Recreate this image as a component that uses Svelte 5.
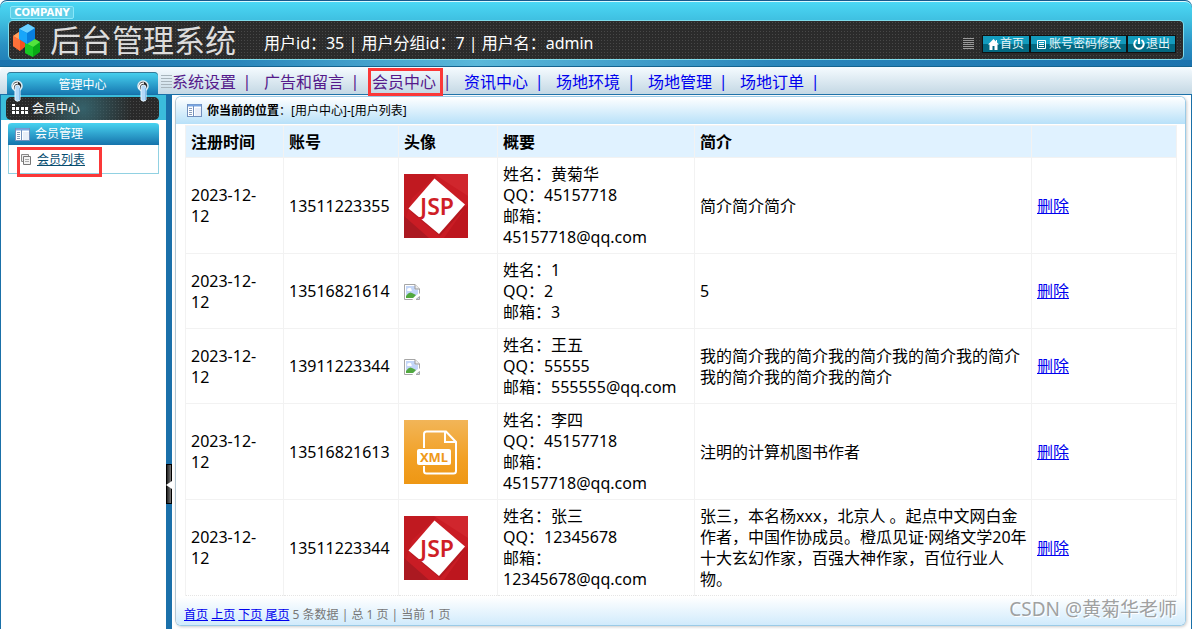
<script>
  const nav = [
    { label: '系统设置', seen: true },
    { label: '广告和留言', seen: true },
    { label: '会员中心', seen: true, marked: true },
    { label: '资讯中心' },
    { label: '场地环境' },
    { label: '场地管理' },
    { label: '场地订单' }
  ];
  const date = '2023-12-\n12';
  const members = [
    { account: '13511223355', pic: 'jsp', info: '姓名：黄菊华\nQQ：45157718\n邮箱：\n45157718@qq.com', intro: '简介简介简介' },
    { account: '13516821614', pic: 'none', info: '姓名：1\nQQ：2\n邮箱：3', intro: '5' },
    { account: '13911223344', pic: 'none', info: '姓名：王五\nQQ：55555\n邮箱：555555@qq.com', intro: '我的简介我的简介我的简介我的简介我的简介我的简介我的简介我的简介' },
    { account: '13516821613', pic: 'xml', info: '姓名：李四\nQQ：45157718\n邮箱：\n45157718@qq.com', intro: '注明的计算机图书作者' },
    { account: '13511223344', pic: 'jsp', info: '姓名：张三\nQQ：12345678\n邮箱：\n12345678@qq.com', intro: '张三，本名杨xxx，北京人 。起点中文网白金作者，中国作协成员。橙瓜见证·网络文学20年十大玄幻作家，百强大神作家，百位行业人物。' }
  ];
</script>

{#snippet windowIcon()}
  <svg class="win" width="16" height="13" viewBox="0 0 16 13" aria-hidden="true">
    <rect x=".5" y=".5" width="14" height="12" fill="#fff" stroke="#7290bd" />
    <path d="M1 1.5h13" stroke="#78a5e2" stroke-width="2" />
    <path d="M6.5 2v10" stroke="#7290bd" />
    <path d="M2 4.5h3M2 6.5h3M2 8.5h3M2 10.5h3" stroke="#889bb8" />
    <path d="M8 4h6v8H8z" fill="#e9eef8" />
  </svg>
{/snippet}

{#snippet ring()}
  <svg width="14" height="24" viewBox="0 0 14 24" aria-hidden="true">
    <circle cx="6" cy="6" r="5" fill="#2a2a2a" stroke="#dcecf3" stroke-width="1.500" />
    <path d="M2 9q0-6 5-6" fill="none" stroke="#fff" stroke-width="1.500" />
    <path d="M4 20V7.500a2.500 2.500 0 0 1 5 0V20q-2.500 2.500-5 0" fill="#b4d9f8" stroke="#e9f6ff" />
    <path d="M8.500 8v12" stroke="#86bdea" />
  </svg>
{/snippet}

<div class="page">
  <header>
    <div class="company"><span>COMPANY</span></div>
    <div class="banner">
      <svg class="logo" width="28" height="33" viewBox="0 0 28 33" aria-hidden="true">
        <path d="M0 12l6-4 7 4v10l-6 5-7-5z" fill="#f4511e" /><path d="M0 12l6-4 7 4-6 4z" fill="#ffa05c" /><path d="M0 12l7 4v11l-7-5z" fill="#ff7139" />
        <path d="M12 19l8-5 7 4v10l-7 5-8-4z" fill="#08a916" /><path d="M12 19l8-5 7 4-7 5z" fill="#52e33d" /><path d="M12 19l8 4v10l-8-4z" fill="#17c824" />
        <path d="M6 5l9-5 7 4v11l-8 5-8-5z" fill="#087fdf" /><path d="M6 5l9-5 7 4-8 5z" fill="#6ad0ff" /><path d="M6 5l8 4v11l-8-5z" fill="#18a6fa" />
      </svg>
      <h1>后台管理系统</h1>
      <p class="user">用户id：35 | 用户分组id：7 | 用户名：admin</p>
      <i class="lines"></i>
      <div class="actions">
        <button><svg width="11" height="11" viewBox="0 0 11 11" aria-hidden="true"><path d="M5.5 0L0 5.5h1.500V11h3V7h2v4h3V5.500H11L9 3.500V1H8v1.500z" fill="#fff" /></svg>首页</button>
        <button><svg class="wide" width="11" height="11" viewBox="0 0 11 11" aria-hidden="true"><path d="M1.500 1.500h8v8h-8zM3 3.500h5M3 5.500h5M3 7.500h5" fill="none" stroke="#fff" /></svg>账号密码修改</button>
        <button><svg width="12" height="12" viewBox="0 0 12 12" aria-hidden="true"><path d="M3.500 2a4.700 4.700 0 1 0 5 0M6 0v6" fill="none" stroke="#fff" stroke-width="2" /></svg>退出</button>
      </div>
    </div>
  </header>

  <div class="navbar">
    <div class="tab">管理中心<span class="ring left">{@render ring()}</span><span class="ring right">{@render ring()}</span></div>
    <i class="lines light"></i>
    <nav>
      {#each nav as item}
        <a href="#top" class:seen={item.seen} class:marked={item.marked}>{item.label}</a><span class="bar">|</span>
      {/each}
    </nav>
  </div>

  <div class="body">
    <aside>
      <div class="group">
        <div class="current">
          <svg width="16" height="10" viewBox="0 0 16 10" aria-hidden="true"><path d="M0 0h3v2H0zM0 3h3v3H0zM4 3h3v3H4zM9 3h3v3H9zM13 3h3v3h-3zM0 7h3v3H0zM4 7h3v3H4zM9 7h3v3H9zM13 7h3v3h-3z" fill="#fff" /></svg>
          会员中心
        </div>
      </div>
      <section class="menu">
        <h2>{@render windowIcon()}会员管理</h2>
        <ul>
          <li>
            <svg width="11" height="11" viewBox="0 0 11 11" aria-hidden="true"><path d="M.5.5h7v7h-7z" fill="#eee" stroke="#888" /><path d="M2.500 2.500h7v8h-7z" fill="#f3f3f3" stroke="#777" /><path d="M4 5.500h4M4 7.500h4" stroke="#aaa" /></svg>
            <a href="#list">会员列表</a>
          </li>
        </ul>
      </section>
    </aside>
    <div class="split"><button aria-label="收起"></button></div>
    <main>
      <div class="panel">
        <div class="crumb">{@render windowIcon()}<b>你当前的位置</b>：[用户中心]-[用户列表]</div>
        <table>
          <colgroup><col class="c1" /><col class="c2" /><col class="c3" /><col class="c4" /><col class="c5" /><col class="c6" /></colgroup>
          <thead><tr><th>注册时间</th><th>账号</th><th>头像</th><th>概要</th><th>简介</th><th></th></tr></thead>
          <tbody>
            {#each members as m}
              <tr>
                <td>{date}</td>
                <td>{m.account}</td>
                <td>
                  {#if m.pic === 'jsp'}
                    <svg width="64" height="64" viewBox="0 0 64 64" aria-hidden="true">
                      <rect width="64" height="64" fill="#c91c24" />
                      <path d="M0 0h34L8 24 0 50z" fill="#c01920" /><path d="M30 0h34v22z" fill="#d0262d" /><path d="M0 42l25 22H0z" fill="#ab1921" /><path d="M64 30v34H40z" fill="#bd161e" />
                      <path d="M33 8l29 25-26 29L7 38z" fill="#95131a" opacity=".4" />
                      <path d="M30.500 4.500L61 30.500 35 60 4.500 34.500z" fill="#fff" />
                      <text x="33" y="41" text-anchor="middle" font-size="23" font-weight="600" fill="#cf1f27">JSP</text>
                    </svg>
                  {:else if m.pic === 'xml'}
                    <svg width="64" height="64" viewBox="0 0 64 64" aria-hidden="true">
                      <defs><linearGradient id="orange" x1="0" y1="0" x2="0" y2="1"><stop offset="0" stop-color="#f2b558" /><stop offset=".6" stop-color="#f2a024" /><stop offset="1" stop-color="#ee9714" /></linearGradient></defs>
                      <rect width="64" height="64" fill="url(#orange)" />
                      <path d="M20 28V14q0-2.500 2.500-2.500H42L52 22v29q0 2.500-2.500 2.500h-27Q20 53.500 20 51v-5M41 12v10h10" fill="none" stroke="#fff" stroke-width="2" />
                      <rect x="13" y="29" width="34" height="16" rx="2" fill="#fff" />
                      <text x="30" y="42" text-anchor="middle" font-size="13" font-weight="700" fill="#ef9a1a">XML</text>
                    </svg>
                  {:else}
                    <svg width="16" height="16" viewBox="0 0 16 16" aria-hidden="true">
                      <path d="M.5.500h10.500l4.500 4.500v5.500l-5 5H.500z" fill="#fff" stroke="#a6a6a6" />
                      <path d="M2 2h9v3.500h3v4.500l-5 4H2z" fill="#c3d6f8" />
                      <path d="M3 6q0-2 2-2 2-1 2.500 1.500Q8.500 7 7 7H4Q3 7 3 6" fill="#fff" />
                      <path d="M2 14v-2q3-5 6-3l4 2-3 3z" fill="#51a83f" />
                      <path d="M9 16l7-6" stroke="#fff" stroke-width="2" />
                      <path d="M12 15.500h3.500V12.500z" fill="#c3d6f8" stroke="#a6a6a6" />
                      <path d="M11 .5v4.500h4.500" fill="#eee" stroke="#999" />
                    </svg>
                  {/if}
                </td>
                <td>{m.info}</td>
                <td>{m.intro}</td>
                <td><a href="#delete">删除</a></td>
              </tr>
            {/each}
          </tbody>
        </table>
        <footer>
          <a href="#first">首页</a> <a href="#prev">上页</a> <a href="#next">下页</a> <a href="#last">尾页</a> 5 条数据 | 总 1 页 | 当前 1 页
        </footer>
      </div>
      <div class="mark">CSDN @黄菊华老师</div>
    </main>
  </div>
</div>

<style>
  :global(body) { margin: 0; background: #fff; }
  .page { min-height: 100vh; display: flex; flex-direction: column; box-sizing: border-box; position: relative; font: 16px/21px "Noto Sans", "Noto Sans CJK SC", sans-serif; color: #000; overflow: hidden; }
  .page, button { font-family: "Noto Sans", "Noto Sans CJK SC", sans-serif; }
  a { color: #00e; }
  header { height: 67px; box-sizing: border-box; padding: 3px 9px 7px; background: linear-gradient(90deg, #1b73ae, #2a86bb 20%, #5ab8da 40%, #2a86bb 65%, #1b73ae) 0 100% / 100% 6px no-repeat, linear-gradient(#4bd8f5 2px, #3fc0e1 20px, #2a91c4 45px, #207fb7 62px, #126493); border-bottom: 1px solid #146490; box-shadow: inset 0 1px #17598c, inset 0 3px 0 -1px #d9f8ff; border-radius: 7px 7px 0 0; }
  .company { height: 18px; display: flex; align-items: center; }
  .company span { margin-left: 1px; width: 62px; height: 11px; border: 1px solid #8ae7f9; border-radius: 2px; background: #5ecfe8; color: #fff; font: 700 10px/11px "DejaVu Sans", sans-serif; text-align: center; }
  .banner { height: 38px; box-sizing: border-box; display: flex; align-items: center; border-radius: 4px; box-shadow: 0 0 0 1px #7fdcec; background: radial-gradient(circle, #484848 1px, transparent 1px) 0 0 / 3px 3px, #2b2b2b; padding: 0 8px 0 4px; }
  h1 { margin: 0 0 0 9px; font-size: 31px; line-height: 38px; font-weight: 400; color: #ddd; white-space: nowrap; }
  .user { margin: 6px 0 0 28px; color: #fff; flex: 1; white-space: nowrap; }
  .lines { width: 11px; height: 12px; flex: none; margin: 8px 9px 0 0; background: repeating-linear-gradient(#999 0 1px, transparent 1px 2px); }
  .lines.light { margin: 8px 0 0; background: repeating-linear-gradient(#a8b5bd 0 1px, transparent 1px 3px); height: 14px; }
  .actions { display: flex; gap: 2px; margin-top: 8px; }
  .actions button { height: 16px; padding: 0 5px; display: flex; align-items: center; gap: 1px; border: 0; outline: 1px solid #111; background: linear-gradient(#139bbd 50%, #026982 50%); color: #e9f5f8; font-size: 12px; line-height: 16px; white-space: nowrap; }
  .actions .wide { margin-right: 1px; }
  .navbar { height: 28px; box-sizing: border-box; display: flex; border-bottom: 1px solid #1a70a8; background: linear-gradient(#f5fbff, #c4d8e4); border-radius: 5px 5px 0 0; }
  .tab { position: relative; width: 151px; height: 22px; margin: 5px 3px 0 7px; flex: none; border-radius: 4px 4px 0 0; background: linear-gradient(#48d3f0, #1779b2); color: #fff; font-size: 12px; line-height: 25px; text-align: center; box-shadow: inset 0 1px #357996; }
  .ring { position: absolute; top: 8px; z-index: 2; line-height: 0; }
  .ring.left { left: 4px; }
  .ring.right { right: 7px; }
  nav { display: flex; }
  nav a { text-decoration: none; line-height: 30px; white-space: nowrap; }
  nav a.seen { color: #551a8b; }
  nav a.marked { position: relative; z-index: 1; height: 22px; line-height: 23px; padding: 0 4px 0 1px; margin: 1px -7px 0 -4px; border: 3px solid #fb3838; }
  .bar { width: 28px; box-sizing: border-box; padding-right: 6px; text-align: center; line-height: 28px; color: #00e; }
  nav a.seen + .bar { color: #551a8b; }
  .body { flex: 1; display: flex; }
  aside { width: 165px; flex: none; border-left: 1px solid #1a70a8; }
  .group { background: #3bbddb; padding: 2px 7px 0 5px; }
  .current { height: 23px; box-sizing: border-box; border-radius: 5px; padding-left: 6px; display: flex; align-items: center; gap: 4px; background: radial-gradient(circle at center, #35616a, transparent 65%), radial-gradient(circle, #484848 1px, transparent 1px) 0 0 / 3px 3px, #292929; color: #fff; font-size: 12px; }
  .menu { margin: 3px 7px 0; border: 1px solid #91d1e2; border-top: 0; border-radius: 3px 3px 0 0; }
  h2 { margin: 0 -1px; height: 22px; display: flex; align-items: center; gap: 4px; padding-left: 7px; font-size: 12px; font-weight: 400; line-height: 22px; color: #fff; background: linear-gradient(#48d3f0, #1673ac); border-radius: 4px 4px 0 0; }
  ul { list-style: none; margin: 0; padding: 2px 0 0 8px; height: 26px; }
  li { width: 78px; height: 24px; box-sizing: content-box; padding-left: 1px; display: flex; align-items: flex-start; gap: 5px; border: 3px solid #fb3838; font-size: 12px; line-height: 20px; }
  li svg { margin-top: 4px; }
  li a { color: #074d70; }
  .split { width: 6px; flex: none; background: #1a70aa; display: flex; align-items: center; }
  .split button { position: relative; width: 6px; height: 40px; margin-top: 244px; padding: 0; border: 1px solid #000; background: linear-gradient(90deg, #222, #777); }
  .split button::after { content: ""; position: absolute; right: -1px; top: 16px; border: 4px solid transparent; border-right: 6px solid #fff; border-left: 0; }
  main { flex: 1; min-width: 0; padding: 1px 5px 3px 3px; border-right: 1px solid #1a70a8; position: relative; display: flex; }
  .panel { flex: 1; min-width: 0; border: 1px solid #9bcbe7; border-left-color: #b5c6d1; border-radius: 6px; box-shadow: 1px 1px 3px #ccc; box-sizing: border-box; display: flex; flex-direction: column; overflow: hidden; }
  .crumb { height: 27px; padding-left: 11px; display: flex; align-items: center; font-size: 12px; white-space: nowrap; background: linear-gradient(#fff, #b8e1f9); }
  .crumb b { margin-left: 4px; }
  table { margin: 1px 8px 0 9px; border-collapse: collapse; table-layout: fixed; width: calc(100% - 17px); }
  .c1 { width: 98px; } .c2 { width: 115px; } .c3 { width: 99px; } .c4 { width: 197px; } .c5 { width: 337px; }
  th { text-align: left; background: #e0f2ff; padding: 6px 5px 4px; border: 1px solid #f2f2f2; line-height: 21px; }
  td { padding: 6px 0 5px 5px; border: 1px solid #f2f2f2; border-bottom-style: dotted; border-bottom-color: #e5e5e5; vertical-align: middle; white-space: pre-line; line-height: 21px; }
  td svg { display: block; }
  footer { margin-top: auto; height: 28px; padding-left: 8px; font-size: 12px; line-height: 36px; color: #777; background: linear-gradient(#fff, #d1ebfc); white-space: nowrap; }
  .mark { position: absolute; right: 14px; bottom: 8px; font-size: 19px; line-height: 24px; color: #888c; text-shadow: 1px 1px #fff; }
</style>
